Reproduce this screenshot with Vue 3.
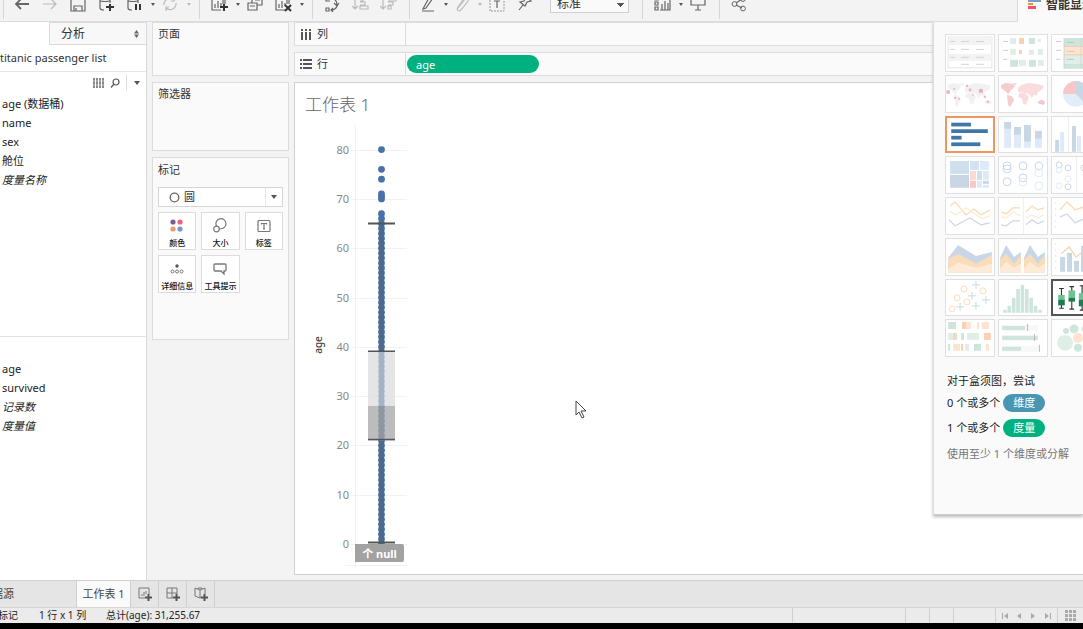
<script setup>
import { ref } from 'vue'

const G = '#cde5da', GL = '#dfefe8', O = '#fbd0b0', OL = '#fde3d0', B = '#c9d6e3', BL = '#deeafb', P = '#f8c8c8'

const rect = (x, y, width, height, fill) => ['rect', { x, y, width, height, fill }]
const dot = (cx, cy, r, fill) => ['circle', { cx, cy, r, fill }]
const ring = (cx, cy, r, stroke) => ['circle', { cx, cy, r, fill: 'none', stroke, 'stroke-width': 1 }]
const line = (points, stroke, w = 1.2) => ['polyline', { points, fill: 'none', stroke, 'stroke-width': w }]
const area = (points, fill) => ['polygon', { points, fill }]
const plus = (x, y) => ['path', { d: `M${x - 4} ${y}h8M${x} ${y - 4}v8`, stroke: G, 'stroke-width': 1.2 }]

const continents = (f) => [
  area('3,10 8,8 14,9 17,11 13,15 10,19 7,16 3,13', f),
  area('9,20 14,22 16,25 12,32 10,30', f),
  area('14,8 19,8 17,11', f),
  area('20,13 23,10 30,8 40,9 46,11 44,15 40,17 39,21 36,20 34,23 31,19 28,18 20,17', f),
  area('21,18 27,18 31,22 28,30 25,29 24,24 20,22', f),
  area('40,27 44,25 47,27 46,30 41,29', f)
]
const boxplot = (x, top, a, m, b, bottom) => [
  ['path', { d: `M${x + 3.5} ${top}V${bottom}M${x + 1} ${top}h5M${x + 1} ${bottom}h5`, stroke: '#333', 'stroke-width': 1.2 }],
  rect(x, a, 7, m - a, '#6cc495'), rect(x, m, 7, b - m, '#1d7d50')
]

const thumbs = [
  { name: '文本表', shapes: [
    ['rect', { x: 3, y: 3, width: 44, height: 31, fill: '#fff', stroke: '#e6e6e6' }],
    rect(3, 4, 44, 7, '#f3f3f3'), rect(3, 20, 44, 7, '#f3f3f3'),
    ...[7, 15, 23].map((y) => rect(5, y, 5, 1, '#d4d4d4')),
    ...[7, 15, 23, 30].flatMap((y) => [rect(16, y, 8, 1, '#d4d4d4'), rect(31, y, 8, 1, '#d4d4d4')])] },
  { name: '热图', shapes: [
    rect(5, 7, 5, 1, '#ccc'), rect(5, 16, 5, 1, '#ccc'), rect(5, 25, 4, 1, '#ccc'),
    rect(12, 4, 6, 6, GL), rect(21, 4, 5, 6, O), rect(31, 4, 6, 6, G), rect(40, 5, 3, 3, GL),
    rect(12, 15, 6, 6, GL), rect(21, 16, 3, 4, O), rect(31, 16, 5, 5, GL), rect(40, 15, 5, 6, GL),
    rect(12, 26, 8, 7, G), rect(21, 26, 7, 6, GL), rect(31, 26, 7, 7, G), rect(40, 26, 6, 6, GL)] },
  { name: '突出显示表', shapes: [
    rect(5, 7, 5, 1, '#ccc'), rect(5, 16, 5, 1, '#ccc'), rect(5, 25, 4, 1, '#ccc'),
    rect(13, 4, 33, 8, G), rect(13, 13, 33, 8, OL), rect(13, 21, 33, 9, GL), rect(13, 30, 33, 5, G),
    line('13,4 13,35', '#c9d6cf', 1), line('13,12.5 46,12.5', '#e5cdb8', 1), line('13,21 46,21', '#e5cdb8', 1), line('30,4 30,35', '#d8d8c8', 1),
    rect(16, 8, 7, 1, '#b5ccc0'), rect(16, 17, 7, 1, '#e5c8b0'), rect(16, 25, 7, 1, '#b5ccc0')] },
  { name: '符号地图', shapes: [...continents('#f1f1f1'), dot(3, 17, 2, '#f0b5c2'), dot(9, 14, 1, '#f0b5c2'), dot(22, 11, 1.2, '#f0b5c2'), dot(25, 15, 1.5, '#f0b5c2'), dot(36, 16, 2.2, '#efacbb'), dot(40, 22, 1.3, '#f0b5c2'), dot(10, 23, 1.2, '#f0b5c2'), dot(14, 24, 1, '#f0b5c2'), dot(28, 20, 1, '#f0b5c2'), dot(43, 27, 1.3, '#f0b5c2')] },
  { name: '填充地图', shapes: [...continents('#fbdcdc'), area('3,10 8,8 14,9 17,11 13,15 10,19 7,16 3,13', '#f4cdcd'), area('9,20 14,22 16,25 12,32 10,30', '#f6cccc'), area('40,27 44,25 47,27 46,30 41,29', '#f4c8c8')] },
  { name: '饼图', shapes: [dot(25, 19, 13, '#e1edf9'), ['path', { d: 'M25 19V6A13 13 0 0 0 12 19Z', fill: P }], ['path', { d: 'M25 19V6A13 13 0 0 1 34 28Z', fill: B }]] },
  { name: '水平条', state: 'picked', shapes: [[5, 6, 21], [5, 13, 39], [5, 20, 11], [5, 27, 31]].map(([x, y, w]) => rect(x, y, w, 4, '#3f78a6')) },
  { name: '堆叠条', shapes: [rect(6, 6, 7, 7, B), rect(6, 13, 7, 19, BL), rect(16, 11, 7, 8, B), rect(16, 19, 7, 13, BL), rect(26, 9, 7, 17, B), rect(26, 26, 7, 6, BL), rect(37, 15, 7, 8, B), rect(37, 23, 7, 9, BL)] },
  { name: '并排条', shapes: [rect(4, 24, 4, 12, B), rect(9, 16, 4, 20, BL), rect(17, 1, 1, 36, '#eee'), rect(21, 10, 4, 26, B), rect(26, 20, 4, 16, BL), rect(37, 12, 4, 24, B)] },
  { name: '树状图', shapes: [rect(5, 5, 19, 13, '#cfdfec'), rect(5, 19, 19, 13, B), rect(25, 5, 9, 9, '#d3e2f0'), rect(35, 5, 9, 9, BL), rect(25, 15, 6, 9, '#fad9d7'), rect(32, 15, 5, 9, '#cfdfec'), rect(38, 15, 6, 9, BL), rect(25, 25, 6, 7, P), rect(32, 25, 5, 7, BL), rect(38, 25, 6, 3, B), rect(38, 29, 6, 3, BL)] },
  { name: '圆视图', shapes: [ring(9, 10, 4, B), ring(9, 13, 4, B), ring(9, 26, 4, B), ring(25, 10, 4, B), ring(25, 22, 4, B), ring(25, 26, 4, BL), ring(41, 10, 4, B), ring(41, 17, 4, BL), ring(41, 30, 4, BL)] },
  { name: '并排圆', shapes: [ring(8, 9, 3, B), ring(8, 14, 3, BL), ring(17, 12, 3, B), ring(17, 23, 3, BL), ring(8, 30, 3, BL), ring(17, 31, 3, B), rect(25, 1, 1, 36, '#eee'), ring(33, 12, 3, B)] },
  { name: '连续线', shapes: [line('5,9 10,5 21,18 29,12 36,18 45,13', '#fbd9ae'), line('5,15 11,18 21,11 37,22 45,19', '#fdebd4'), line('4,23 10,29 25,21 36,28 45,26', '#cfd4e6')] },
  { name: '离散线', shapes: [line('3,15 8,17 15,11 22,11', '#fbd9ae'), line('28,15 34,9 40,13 46,11', '#fbd9ae'), line('3,20 8,21 15,15 22,19', '#fdebd4'), line('28,21 34,18 40,21 46,18', '#fdebd4'), line('3,28 8,29 15,24 22,24', '#cfd4e6'), line('28,28 34,23 40,27 46,24', '#cfd4e6'), rect(25, 1, 1, 36, '#f0f0f0')] },
  { name: '双线', shapes: [line('9,13 16,5 24,13 33,10', '#fbd9ae'), line('9,20 16,17 24,26 33,22', '#cfd4e6'), ...[5, 11, 17, 23, 29].map((y) => rect(4, y, 1, 2, '#e8e8e8'))] },
  { name: '连续面积图', shapes: [area('3,20 13,7 31,18 47,14 47,35 3,35', '#c8d7e6'), area('3,21 13,16 31,26 47,17 47,35 3,35', '#fbdcb9'), area('3,31 13,25 31,30 47,26 47,35 3,35', '#fdebd8')] },
  { name: '离散面积图', shapes: [0, 24].flatMap((d) => [area(`${2 + d},20 ${8 + d},7 ${16 + d},19 ${23 + d},14 ${23 + d},35 ${2 + d},35`, '#c8d7e6'), area(`${2 + d},22 ${8 + d},16 ${16 + d},26 ${23 + d},17 ${23 + d},35 ${2 + d},35`, '#fbdcb9'), area(`${2 + d},31 ${8 + d},24 ${16 + d},30 ${23 + d},26 ${23 + d},35 ${2 + d},35`, '#fdebd8')]).concat([rect(24, 1, 2, 36, '#fff')]) },
  { name: '双组合', shapes: [rect(9, 19, 5, 15, '#c8d7e6'), rect(16, 15, 5, 19, '#c8d7e6'), rect(23, 23, 5, 11, '#c8d7e6'), rect(30, 8, 5, 26, '#c8d7e6'), line('10,16 18,9 25,19 33,13', '#fbcfa8'), ...[5, 11, 17, 23, 29].map((y) => rect(4, y, 1, 2, '#e8e8e8'))] },
  { name: '散点图', shapes: [ring(19, 10, 3, '#fbdcb9'), ring(38, 12, 3, '#fbdcb9'), ring(12, 19, 3, '#fbdcb9'), ring(22, 23, 3, '#fbdcb9'), ring(7, 30, 3, '#fbdcb9'), plus(31, 6), plus(27, 17), plus(41, 21), plus(31, 27), plus(15, 28)] },
  { name: '直方图', shapes: [31, 27, 19, 10, 6, 10, 19, 27, 31].map((y, i) => rect(5 + i * 4.4, y, 3.6, 34 - y, G)) },
  { name: '盒须图', state: 'advised', shapes: [...boxplot(6, 9, 16, 21, 27, 30), ...boxplot(17, 7, 11, 19, 23, 31), ...boxplot(28, 6, 14, 21, 28, 32)] },
  { name: '甘特图', shapes: [rect(3, 3, 8, 7, G), rect(17, 3, 4, 7, O), rect(21, 3, 5, 7, OL), rect(32, 3, 2, 7, OL), rect(37, 3, 7, 7, OL), rect(3, 14, 5, 7, GL), rect(8, 14, 2, 7, O), rect(10, 14, 2, 7, G), rect(16, 14, 3, 7, G), rect(22, 14, 12, 7, GL), rect(39, 14, 7, 7, O), rect(3, 25, 2, 7, G), rect(8, 25, 7, 7, OL), rect(16, 25, 2, 7, O), rect(20, 25, 4, 7, GL), rect(29, 25, 7, 7, G), rect(41, 25, 3, 7, OL)] },
  { name: '靶心图', shapes: [[7, 23, 29], [17, 36, 36], [28, 19, 41]].flatMap(([y, w, m]) => [rect(4, y - 1, 36, 6, '#f8f8f8'), rect(4, y, w, 4, G), rect(m, y - 2, 1, 7, '#b8b8b8')]) },
  { name: '气泡图', shapes: [dot(14, 24, 8, GL), dot(15, 12, 3, G), dot(23, 10, 4.5, G), dot(27, 19, 5, OL), dot(27, 29, 4, G), dot(33, 10, 3, GL)] }
]

const I = {
  back: 'M15 8H2M7 3L2 8l5 5',
  forward: 'M1 8h13M9 3l5 5-5 5',
  save: 'M1 1h14v14H1zM4 15v-5h8v5M6 12v3',
  db: 'M2 3c0-2 10-2 10 0v4M2 3v9c0 1 1 2 4 2M2 4c0 2 10 2 10 0',
  refresh: 'M2 9a6 6 0 0 1 10-5M14 7a6 6 0 0 1-10 5M12 1v4H9M4 15v-4h3',
  chart: 'M10 14H1V1h13v7M4 12V8M7 12V5M10 10V7M12 8V4',
  copy: 'M1 7h9v7H1zM5 7V1h10v8h-5M3 10h5M8 4h5',
  swap: 'M2 1v4h4M2 12h3v3H2zM6 3c4-1 7 1 7 6M10 7l3 3 2-3M13 10c-1 3-3 4-6 4M9 12l-2 2 2 2',
  asc: 'M3 1v11M0 10l3 3 3-3M8 3h3v2H8M8 6h5v3H8M8 10h8v3H8z',
  desc: 'M3 1v11M0 10l3 3 3-3M8 3h8v2H8M8 6h5v3H8M8 10h3v3H8z',
  pen: 'M4 11l6-11 3 2-7 10-3 1zM2 15h12',
  clip: 'M4 12l7-9c2-2 4 0 3 2l-7 9c-2 2-5 0-3-3l5-7',
  text: 'M5 5h6M8 5v7',
  pin: 'M9 1l5 4-4 1-2 4-5-4 4-1zM6 9l-4 5',
  screen: 'M1 1h14v8H1zM8 9v5M5 14h6',
  share: 'M5 7l6-4M5 9l6 3'
}
const tools = [
  { sep: 'edge' },
  { label: '撤消', d: I.back, heavy: true }, { label: '重做', d: I.forward, off: true }, { label: '保存', d: I.save },
  { label: '新建数据源', d: I.db, mark: 'M12 8v7M8 11h8' }, { label: '暂停自动更新', d: I.db, mark: 'M10 8v6M14 8v6' }, { caret: true },
  { label: '刷新', d: I.refresh, off: true }, { caret: true, off: true }, { sep: true },
  { label: '新建工作表', d: I.chart, mark: 'M13 8v7M9 11h8' }, { caret: true }, { label: '复制', d: I.copy },
  { label: '清除工作表', d: I.chart, mark: 'M10 9l6 6M16 9l-6 6' }, { caret: true }, { sep: true },
  { label: '交换行和列', d: I.swap }, { label: '升序', d: I.asc, off: true }, { label: '降序', d: I.desc, off: true }, { sep: true },
  { label: '突出显示', d: I.pen, slim: true }, { caret: true }, { label: '成员分组', d: I.clip, off: true, slim: true }, { caret: true, off: true },
  { label: '显示标记标签', d: I.text, frame: true }, { label: '固定轴', d: I.pin }, { fit: true }, { sep: true },
  { label: '显示卡', d: 'M1 1h3v3H1zM1 6h3v3H1zM1 11h3v3H1zM6 14h10V1M8 14V8M11 14V5M14 14V7' }, { caret: true },
  { label: '演示模式', d: I.screen }, { sep: true }, { label: '共享', d: I.share, nodes: true }
]

const dimensions = ref([{ t: 'age (数据桶)' }, { t: 'name' }, { t: 'sex' }, { t: '舱位' }, { t: '度量名称', gen: true }])
const measures = ref([{ t: 'age' }, { t: 'survived' }, { t: '记录数', gen: true }, { t: '度量值', gen: true }])

const y = (v) => 427 - v * 4.93
const ages = [80, 76, 74, 71, 70.5, 70, ...Array.from({ length: 68 }, (_, i) => 67 - i)]
const ticks = [80, 70, 60, 50, 40, 30, 20, 10, 0]
</script>

<template>
  <div class="app">
    <header class="top">
      <div class="toolbar">
        <div class="tools">
          <template v-for="(t, i) in tools" :key="i">
            <span v-if="t.sep" class="sep" :class="{ edge: t.sep === 'edge' }"></span>
            <span v-else-if="t.caret" class="caret" :class="{ off: t.off }"></span>
            <select v-else-if="t.fit" class="fit" aria-label="适合"><option>标准</option></select>
            <button v-else class="tool" :class="{ off: t.off, slim: t.slim }" :aria-label="t.label">
              <svg width="18" height="16" viewBox="0 0 18 16" fill="none" stroke="currentColor">
                <rect v-if="t.frame" x="1" y="1" width="14" height="14" stroke-dasharray="2 1" stroke="#999" />
                <path :d="t.d" :stroke-width="t.heavy ? 1.8 : 1.2" />
                <template v-if="t.nodes">
                  <circle cx="3.5" cy="8" r="2.4" /><circle cx="12" cy="3" r="2.4" /><circle cx="12" cy="12.5" r="2.4" />
                </template>
                <path v-if="t.mark" :d="t.mark" stroke="#333" stroke-width="2" />
              </svg>
            </button>
          </template>
        </div>
      </div>
      <button class="showme-toggle">
        <svg width="14" height="16" viewBox="0 0 14 16">
          <rect x="0" y="0" width="9" height="3" fill="#f28e2b" /><rect x="0" y="4" width="13" height="4" fill="#7d9fc7" />
          <rect x="0" y="9" width="5" height="2" fill="#f28e2b" /><rect x="0" y="12" width="8" height="3" fill="#e9536b" />
        </svg>
        <span>智能显示</span>
      </button>
    </header>

    <main class="main">
      <aside class="data">
        <div class="data-tabs">
          <span class="data-tab-active"></span>
          <button class="data-tab">分析
            <svg width="5" height="8" viewBox="0 0 5 8" fill="#666"><path d="M0 3.4L2.5 0 5 3.4zM0 4.6L2.5 8 5 4.6z" /></svg>
          </button>
        </div>
        <div class="source">titanic passenger list</div>
        <section class="fields dims">
          <div class="field-tools">
            <svg class="grid-icon" width="11" height="10" viewBox="0 0 11 10" stroke="#888" stroke-width="2"><path d="M1 0v10M4 0v10M7 0v10M10 0v10" /><path d="M0 3h11M0 7h11" stroke="#fff" stroke-width=".5" /></svg>
            <svg width="10" height="10" viewBox="0 0 10 10" fill="none" stroke="#555" stroke-width="1.2"><circle cx="6" cy="4" r="3" /><path d="M4 6L1 9.5" /></svg>
            <span class="bar"></span>
            <span class="caret big"></span>
          </div>
          <ul><li v-for="f in dimensions" :key="f.t" :class="{ gen: f.gen }">{{ f.t }}</li></ul>
        </section>
        <section class="fields">
          <ul class="measures"><li v-for="f in measures" :key="f.t" :class="{ gen: f.gen }">{{ f.t }}</li></ul>
        </section>
      </aside>

      <div class="cards">
        <section class="card pages"><h2>页面</h2></section>
        <section class="card filters"><h2>筛选器</h2></section>
        <section class="card marks">
          <h2>标记</h2>
          <div class="mark-type">
            <svg class="mark-ring" width="11" height="11" viewBox="0 0 11 11"><circle cx="5.5" cy="5.5" r="4.3" fill="none" stroke="#666" stroke-width="1.3" /></svg>
            <select aria-label="标记类型"><option>圆</option></select>
            <span class="mark-arrow"><span class="caret big"></span></span>
          </div>
          <div class="mark-grid">
            <button><svg viewBox="0 0 18 16"><circle cx="5" cy="4" r="2.6" fill="#76608f" /><circle cx="12" cy="4" r="2.6" fill="#f0607a" /><circle cx="5" cy="11" r="2.6" fill="#f39a62" /><circle cx="12" cy="11" r="2.6" fill="#7399cc" /></svg>颜色</button>
            <button><svg viewBox="0 0 18 16" fill="none" stroke="#777" stroke-width="1.2"><path d="M5.5 8A5 5 0 1 1 8.5 10.5" /><circle cx="5.5" cy="11" r="2.8" /></svg>大小</button>
            <button><svg viewBox="0 0 18 16" fill="none" stroke="#777" stroke-width="1.2"><rect x="3" y="2.5" width="12" height="11" rx="1" /><path d="M6.5 6.5V5.5h5v1M9 5.5V11M8 11h2" /></svg>标签</button>
            <button><svg viewBox="0 0 18 16" fill="none" stroke="#777"><circle cx="9" cy="5" r="1.7" fill="#555" stroke="none" /><circle cx="4.5" cy="10.5" r="1.5" /><circle cx="9" cy="10.5" r="1.5" /><circle cx="13.5" cy="10.5" r="1.5" /></svg>详细信息</button>
            <button><svg viewBox="0 0 18 16" fill="none" stroke="#777" stroke-width="1.3"><path d="M4 3h10a1 1 0 0 1 1 1v5a1 1 0 0 1-1 1h-1v3l-3-3H4a1 1 0 0 1-1-1V4a1 1 0 0 1 1-1z" /></svg>工具提示</button>
          </div>
        </section>
      </div>

      <div class="work">
        <div class="shelf">
          <div class="shelf-name">
            <svg width="12" height="11" viewBox="0 0 12 11" stroke="#555" stroke-width="2"><path d="M2 0v2M6 0v2M10 0v2M2 3v8M6 3v8M10 3v8" /></svg>列
          </div>
        </div>
        <div class="shelf">
          <div class="shelf-name">
            <svg width="12" height="10" viewBox="0 0 12 10" stroke="#555" stroke-width="2"><path d="M0 1h2M3 1h9M0 5h2M3 5h9M0 9h2M3 9h9" /></svg>行
          </div>
          <button class="pill measure">age</button>
        </div>
        <section class="sheet">
          <h1>工作表 1</h1>
          <div class="viz">
            <svg class="plot" width="120" height="454" viewBox="0 0 120 454">
              <g stroke="#f1f1f1">
                <path d="M60.5 8V450M50 448.5H112" />
                <path v-for="t in ticks" :key="t" :d="`M56 ${Math.round(y(t)) + 0.5}H112`" />
              </g>
              <text v-for="t in ticks" :key="'l' + t" class="tick" x="54" :y="Math.round(y(t)) + 4" text-anchor="end">{{ t }}</text>
              <text class="axis" transform="translate(27 228) rotate(-90)" text-anchor="middle">age</text>
              <circle v-for="a in ages" :key="'a' + a" cx="86.5" :cy="y(a)" r="3.4" fill="#4672a8" />
              <rect x="84" :y="y(65)" width="5" :height="y(0.3) - y(65)" fill="#4d6a8d" />
              <rect x="73" :y="y(39)" width="27" :height="y(28) - y(39)" fill="#dcdcdc" opacity=".75" />
              <rect x="84" :y="y(39)" width="5" :height="y(28) - y(39)" fill="#a3b3c8" />
              <rect x="73" :y="y(28)" width="27" :height="y(21) - y(28)" fill="#a6a6a6" opacity=".75" />
              <g stroke="#555">
                <path :d="`M73 ${y(65)}H100M73 ${y(0.3)}H100`" stroke-width="2" />
                <path :d="`M73 ${y(39.1)}H100M73 ${y(21.2)}H100`" stroke-width="1.5" />
              </g>
            </svg>
            <button class="nulls">个 null</button>
          </div>
        </section>
      </div>

      <aside class="showme">
        <div class="thumbs">
          <button v-for="t in thumbs" :key="t.name" class="thumb" :class="t.state" :aria-label="t.name">
            <svg viewBox="1 1 48 36"><component :is="s[0]" v-for="(s, i) in t.shapes" :key="i" v-bind="s[1]" /></svg>
          </button>
        </div>
        <div class="hint">
          <p>对于盒须图，尝试</p>
          <p class="need">0 个或多个<span class="pill dim">维度</span></p>
          <p class="need">1 个或多个<span class="pill mea">度量</span></p>
          <p class="note">使用至少 1 个维度或分解</p>
        </div>
      </aside>

      <svg class="cursor" width="12" height="19" viewBox="0 0 12 19"><path d="M1 1v14l3-3 3 6 2-1-3-6h5z" fill="#fff" stroke="#444" /></svg>
    </main>

    <nav class="sheets">
      <button class="sheet-tab source-tab"><span>据源</span></button>
      <button class="sheet-tab active">工作表 1</button>
      <button class="sheet-tab add" aria-label="新建工作表"><svg width="14" height="14" viewBox="0 0 14 14"><path d="M7 11H1V1h10v6M4 9V7M6 9V5M8 7V4" /><path class="plus" d="M10.5 7v7M7 10.5h7" /></svg></button>
      <button class="sheet-tab add" aria-label="新建仪表板"><svg width="14" height="14" viewBox="0 0 14 14"><path d="M7 11H1V1h10v6M1 6h10M6 1v10" /><path class="plus" d="M10.5 7v7M7 10.5h7" /></svg></button>
      <button class="sheet-tab add" aria-label="新建故事"><svg width="14" height="14" viewBox="0 0 14 14"><path d="M6 3L1 1v8l5 2 2-1M6 3l5-2v6M6 3v8M4 2V1h4v1" /><path class="plus" d="M10.5 7v7M7 10.5h7" /></svg></button>
    </nav>
    <footer class="status">
      <span class="st marks-count">标记</span>
      <span class="st rows">1 行 x 1 列</span>
      <span class="st">总计(age): 31,255.67</span>
      <div class="cells">
        <span class="cell user"></span><span class="cell"></span><span class="cell"></span><span class="cell wide"></span>
        <span class="cell pager">
          <svg width="50" height="8" viewBox="0 0 50 8" fill="#aaa"><path d="M0 1h1v6H0zM6 1v6L2 4zM19 1v6l-4-3zM29 1v6l4-3zM43 1v6l4-3zM48 1h1v6h-1z" /></svg>
        </span>
        <span class="cell last">
          <svg width="11" height="11" viewBox="0 0 11 11" fill="#aaa"><path d="M0 0h3v3H0zM4 0h3v3H4zM8 0h3v3H8zM0 4h3v3H0zM4 4h3v3H4zM8 4h3v3H8zM0 8h3v3H0zM4 8h3v3H4zM8 8h3v3H8z" /></svg>
        </span>
      </div>
    </footer>
  </div>
</template>

<style>
body { background: #000; }
</style>

<style scoped>
.app { box-sizing: border-box; height: 100vh; padding-bottom: 6px; display: flex; flex-direction: column; overflow: hidden; background: #000; color: #333; font: 11px/18px "Noto Sans", "Noto Sans CJK SC", sans-serif; }
.app *, .app *::before { box-sizing: border-box; }
h1, h2, p, ul { margin: 0; padding: 0; font-weight: 400; list-style: none; }
button, select { margin: 0; padding: 0; border: 0; background: none; color: inherit; font: inherit; appearance: none; border-radius: 0; }
svg { display: block; flex: none; }

.top { display: flex; height: 22px; flex: none; background: #fafafa; }
.toolbar { flex: 1; min-width: 0; display: flex; align-items: flex-end; overflow: hidden; background: #f3f3f3; border-right: 1px solid #d9d9d9; border-bottom: 1px solid #dcdcdc; }
.tools { display: flex; align-items: center; height: 34px; flex: none; padding-left: 3px; }
.tool { width: 28px; height: 24px; display: flex; align-items: center; justify-content: center; color: #666; }
.tool.slim { width: 26px; }
.tool.off { color: #bbb; }
.sep { width: 1px; height: 30px; margin: 0 6px; background: #d6d6d6; }
.sep.edge { margin: 0 5px 0 0; }
.caret { width: 8px; display: flex; justify-content: center; }
.caret::before { content: ""; border: 2px solid transparent; border-top: 3px solid #555; border-bottom: 0; }
.caret.off::before { border-top-color: #bbb; }
.caret.big::before { border-width: 4px 3px 0; }
.fit { width: 79px; height: 18px; margin: 0 7px 0 10px; padding-left: 6px; border: 1px solid #cfcfcf; background: linear-gradient(#555, #555) 66px 7px / 7px 1px no-repeat, linear-gradient(#555, #555) 67px 8px / 5px 1px no-repeat, linear-gradient(#555, #555) 68px 9px / 3px 1px no-repeat, linear-gradient(#555, #555) 69px 10px / 1px 1px no-repeat, #fafafa; font-size: 12px; line-height: 14px; }
.showme-toggle { width: 65px; flex: none; display: flex; align-items: flex-start; gap: 4px; padding-left: 10px; overflow: hidden; font-size: 12px; line-height: 10px; font-weight: 700; white-space: nowrap; }
.showme-toggle svg { margin-top: -6px; }

.main { position: relative; flex: 1; min-height: 0; display: flex; background: #f3f3f3; overflow: hidden; }
.data { width: 147px; flex: none; display: flex; flex-direction: column; background: #fff; border-right: 1px solid #d9d9d9; }
.data-tabs { display: flex; height: 23px; flex: none; }
.data-tab-active { width: 49px; }
.data-tab { flex: 1; display: flex; align-items: center; justify-content: space-between; padding: 0 7px 0 11px; background: #f8f8f8; border: solid #d9d9d9; border-width: 1px 0 1px 1px; font-size: 12px; }
.source { height: 27px; line-height: 26px; border-bottom: 1px solid #e6e6e6; white-space: nowrap; overflow: hidden; flex: none; }
.fields { flex: 1; min-height: 0; }
.dims { flex: none; height: 265px; border-bottom: 1px solid #e2e2e2; }
.field-tools { height: 22px; display: flex; align-items: center; justify-content: flex-end; gap: 6px; padding-right: 5px; }
.bar { width: 1px; height: 16px; background: #ddd; }
.fields ul { padding-left: 2px; }
.fields li { height: 19px; line-height: 19px; color: #222; }
.fields .gen { font-style: italic; }
.measures { padding-top: 22px; }

.cards { width: 137px; flex: none; margin-left: 5px; display: flex; flex-direction: column; gap: 6px; }
.card { background: #fafafa; border: 1px solid #dcdcdc; padding: 2px 5px; }
.card h2 { font-size: 11px; line-height: 18px; }
.pages { height: 54px; }
.filters { height: 69px; }
.marks { height: 183px; padding-top: 3px; }
.mark-type { position: relative; display: flex; height: 20px; margin-top: 8px; border: 1px solid #d6d6d6; background: #fff; }
.mark-type select { flex: 1; padding-left: 25px; font-size: 11px; }
.mark-ring { position: absolute; left: 10px; top: 4px; }
.mark-arrow { width: 17px; display: flex; align-items: center; justify-content: center; border-left: 1px solid #e6e6e6; pointer-events: none; }
.mark-grid { display: grid; grid-template-columns: repeat(3, 1fr); gap: 5px; margin-top: 5px; }
.mark-grid button { height: 38px; display: flex; flex-direction: column; align-items: center; gap: 3px; padding-top: 5px; border: 1px solid #dcdcdc; background: #fff; color: #111; font-size: 8px; line-height: 12px; font-weight: 500; white-space: nowrap; }
.mark-grid svg { width: 18px; height: 16px; }

.work { flex: 1; min-width: 0; margin-left: 5px; display: flex; flex-direction: column; gap: 6px; padding-bottom: 5px; }
.shelf { display: flex; align-items: center; height: 24px; flex: none; background: #fafafa; border: 1px solid #dcdcdc; border-right: 0; }
.shelf-name { width: 111px; align-self: stretch; display: flex; align-items: center; gap: 5px; padding-left: 5px; border-right: 1px solid #dcdcdc; }
.pill { display: inline-block; height: 18px; border-radius: 9px; color: #fff; line-height: 17px; }
.measure { width: 132px; margin-left: 1px; padding-left: 9px; background: #00b180; text-align: left; }
.sheet { flex: 1; min-height: 0; background: #fff; border: 1px solid #cfcfcf; border-right: 0; }
.sheet h1 { padding: 10px 0 0 10px; color: #666; font-size: 17px; line-height: 24px; font-weight: 300; }
.viz { position: relative; width: 120px; }
.tick { fill: #888; font-size: 11px; }
.axis { fill: #444; font-size: 10px; font-weight: 500; }
.nulls { position: absolute; left: 60px; top: 427px; width: 49px; height: 18px; border-radius: 0 2px 2px 0; background: #a2a2a2; color: #fff; font-weight: 700; line-height: 17px; }

.showme { position: absolute; top: 0; right: 0; width: 150px; height: 493px; padding: 12px 0 0 11px; overflow: hidden; background: #fafafa; border-left: 1px solid #dedede; border-bottom: 1px solid #ccc; box-shadow: 0 2px 3px #bbb; }
.thumbs { display: grid; grid-template-columns: repeat(3, 50px); grid-template-rows: repeat(8, 1fr); gap: 3px; height: 323px; }
.thumb { min-height: 0; border: 1px solid #e0e0e0; background: #fff; }
.thumb svg { width: 100%; height: 100%; }
.thumb.picked { border: 2px solid #ee9560; }
.thumb.advised { border: 2px solid #555; }
.hint { padding: 15px 0 0 2px; white-space: nowrap; color: #222; }
.need { display: flex; align-items: center; gap: 3px; height: 18px; margin-top: 4px; }
.need + .need { margin-top: 7px; }
.need .pill { width: 42px; text-align: center; }
.dim { background: #4996b2; }
.mea { background: #00b180; }
.hint .note { margin-top: 8px; color: #777; }
.cursor { position: absolute; left: 575px; top: 378px; }

.sheets { display: flex; height: 27px; flex: none; background: #e5e5e5; border-top: 1px solid #d0d0d0; }
.sheet-tab { display: flex; align-items: center; justify-content: center; border-right: 1px solid #cfcfcf; color: #444; white-space: nowrap; }
.source-tab { width: 77px; justify-content: flex-start; }
.source-tab span { width: 14px; display: flex; justify-content: flex-end; overflow: hidden; }
.sheet-tab.active { width: 54px; background: #fafafa; }
.add { width: 28px; }
.add path { fill: none; stroke: #777; }
.add .plus { stroke: #555; stroke-width: 2; }
.status { display: flex; align-items: center; height: 16px; flex: none; background: #ebebeb; border-top: 1px solid #d6d6d6; color: #222; font-size: 10px; line-height: 15px; white-space: nowrap; }
.marks-count { width: 18px; display: flex; justify-content: flex-end; overflow: hidden; }
.rows { width: 47px; margin: 0 20px 0 21px; }
.cells { display: flex; align-self: stretch; margin-left: auto; }
.cell { width: 24px; border-left: 1px solid #d0d0d0; display: flex; align-items: center; justify-content: center; }
.cell.user { width: 113px; }
.cell.wide { width: 42px; }
.cell.pager { width: 62px; }
.cell.last { width: 26px; }
</style>
